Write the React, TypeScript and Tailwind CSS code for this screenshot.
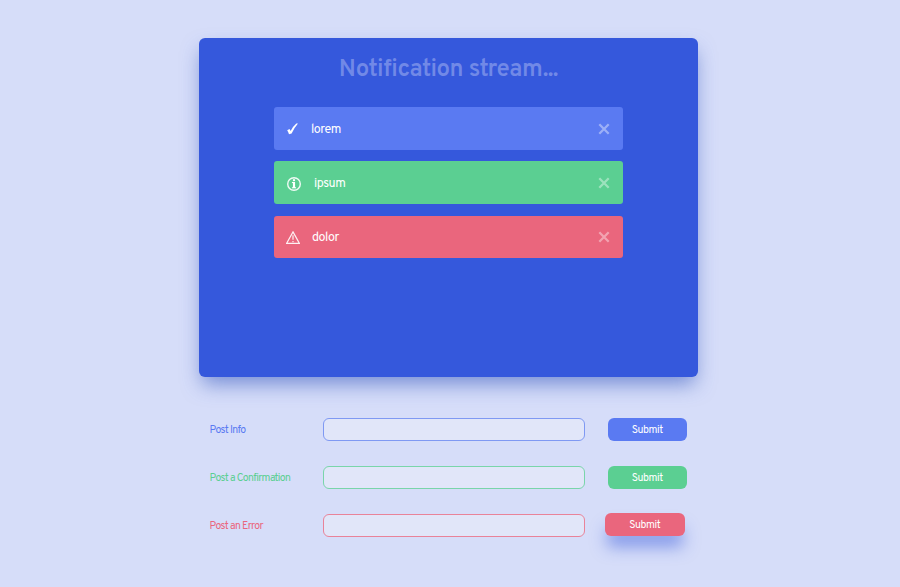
import React from "react";

type Kind = "info" | "confirm" | "error";

const fill: Record<Kind, string> = {
  info: "bg-[#5a7af2]",
  confirm: "bg-[#5bcf92]",
  error: "bg-[#ea667d]",
};

const outline: Record<Kind, string> = {
  info: "border-[#7f99f3]",
  confirm: "border-[#79d5aa]",
  error: "border-[#e98399]",
};

const ink: Record<Kind, string> = {
  info: "text-[#5a7af2]",
  confirm: "text-[#5bcf92]",
  error: "text-[#ea667d]",
};

function Icon({ kind }: { kind: Kind }) {
  if (kind === "info")
    return (
      <svg className="mr-[13px] h-[14px] w-[11px]" viewBox="0 0 11 14" fill="#fff">
        <path d="M.2 8.2 2.5 7Q3.2 8.1 3.6 9.1Q5.8 4.6 9.3 1.6L11 1.6Q7.2 6 4.6 11.4L2 12.3Q1.4 10.1.2 8.2Z" />
      </svg>
    );
  if (kind === "confirm")
    return (
      <svg className="mr-[13px] mt-[2px] h-[14px] w-[14px]" viewBox="0 0 14 14">
        <circle cx="7" cy="7" r="6.3" fill="none" stroke="#fff" strokeOpacity=".9" strokeWidth="1.4" />
        <path d="M6 2.2h2v1.9H6zM5 5H8v5.3h1v1H5v-1h1V6H5z" fill="#fff" stroke="#fff" strokeOpacity=".5" strokeWidth=".3" />
      </svg>
    );
  return (
    <svg className="-ml-px mr-[12px] mt-px h-[13px] w-[14px]" viewBox="0 0 14 13" fill="none" stroke="#fff" strokeOpacity=".9">
      <path d="M7 .9 13.3 12.3H.7Z" strokeWidth="1.2" />
      <path d="M7 4.3V8.8M7 10v1.2" strokeWidth="1.2" />
    </svg>
  );
}

function Notice({ kind, text }: { kind: Kind; text: string }) {
  return (
    <div className={`flex h-[42.6px] items-center rounded-[3px] pl-[13px] pr-[13px] text-white ${fill[kind]}`}>
      <Icon kind={kind} />
      <span className="pt-[3px] text-[12.5px] leading-4 tracking-[-0.45px]">{text}</span>
      <svg className="ml-auto h-3 w-3" viewBox="0 0 12 12" fill="none" stroke="#fff" strokeOpacity=".4" strokeWidth="2.3">
        <path d="M1.3 1.3 10.7 10.7M10.7 1.3 1.3 10.7" />
      </svg>
    </div>
  );
}

function PostRow({ kind, label, raised }: { kind: Kind; label: string; raised?: boolean }) {
  return (
    <div className="flex h-[23px] items-center">
      <label className={`w-[113.5px] pt-[3px] text-[10.5px] leading-4 tracking-[-0.64px] ${ink[kind]}`}>{label}</label>
      <input className={`h-[23px] w-[262px] rounded-[6px] border bg-[#e1e6f9] outline-none ${outline[kind]}`} />
      <button
        className={`h-[22.5px] w-[79.5px] rounded-[6px] pt-[3px] text-[10.5px] leading-4 tracking-[-0.4px] text-white ${fill[kind]} ${
          raised ? "-mt-[2px] ml-5 shadow-[0_13px_16px_-2px_rgba(53,88,220,0.5)]" : "ml-[22.5px]"
        }`}
      >
        Submit
      </button>
    </div>
  );
}

export default function App() {
  return (
    <main className="h-[587px] overflow-hidden bg-[#d6ddf9] pl-[199px] pt-[38.3px] font-['Overpass','Roboto',sans-serif]">
      <section className="h-[338.7px] w-[499px] rounded-[6px] bg-[#3558dc] px-[75px] pt-4 shadow-[0_10px_20px_-3px_rgba(53,88,190,0.6)]">
        <h1 className="h-[53px] whitespace-nowrap text-center text-[24px] font-semibold leading-8 tracking-[-0.37px] text-[#7189e7]">
          Notification stream...
        </h1>
        <div className="flex flex-col gap-[11.6px]">
          <Notice kind="info" text="lorem" />
          <Notice kind="confirm" text="ipsum" />
          <Notice kind="error" text="dolor" />
        </div>
      </section>
      <section className="mt-[41px] flex flex-col gap-[25px] pl-[10.5px]">
        <PostRow kind="info" label="Post Info" />
        <PostRow kind="confirm" label="Post a Confirmation" />
        <PostRow kind="error" label="Post an Error" raised />
      </section>
    </main>
  );
}
